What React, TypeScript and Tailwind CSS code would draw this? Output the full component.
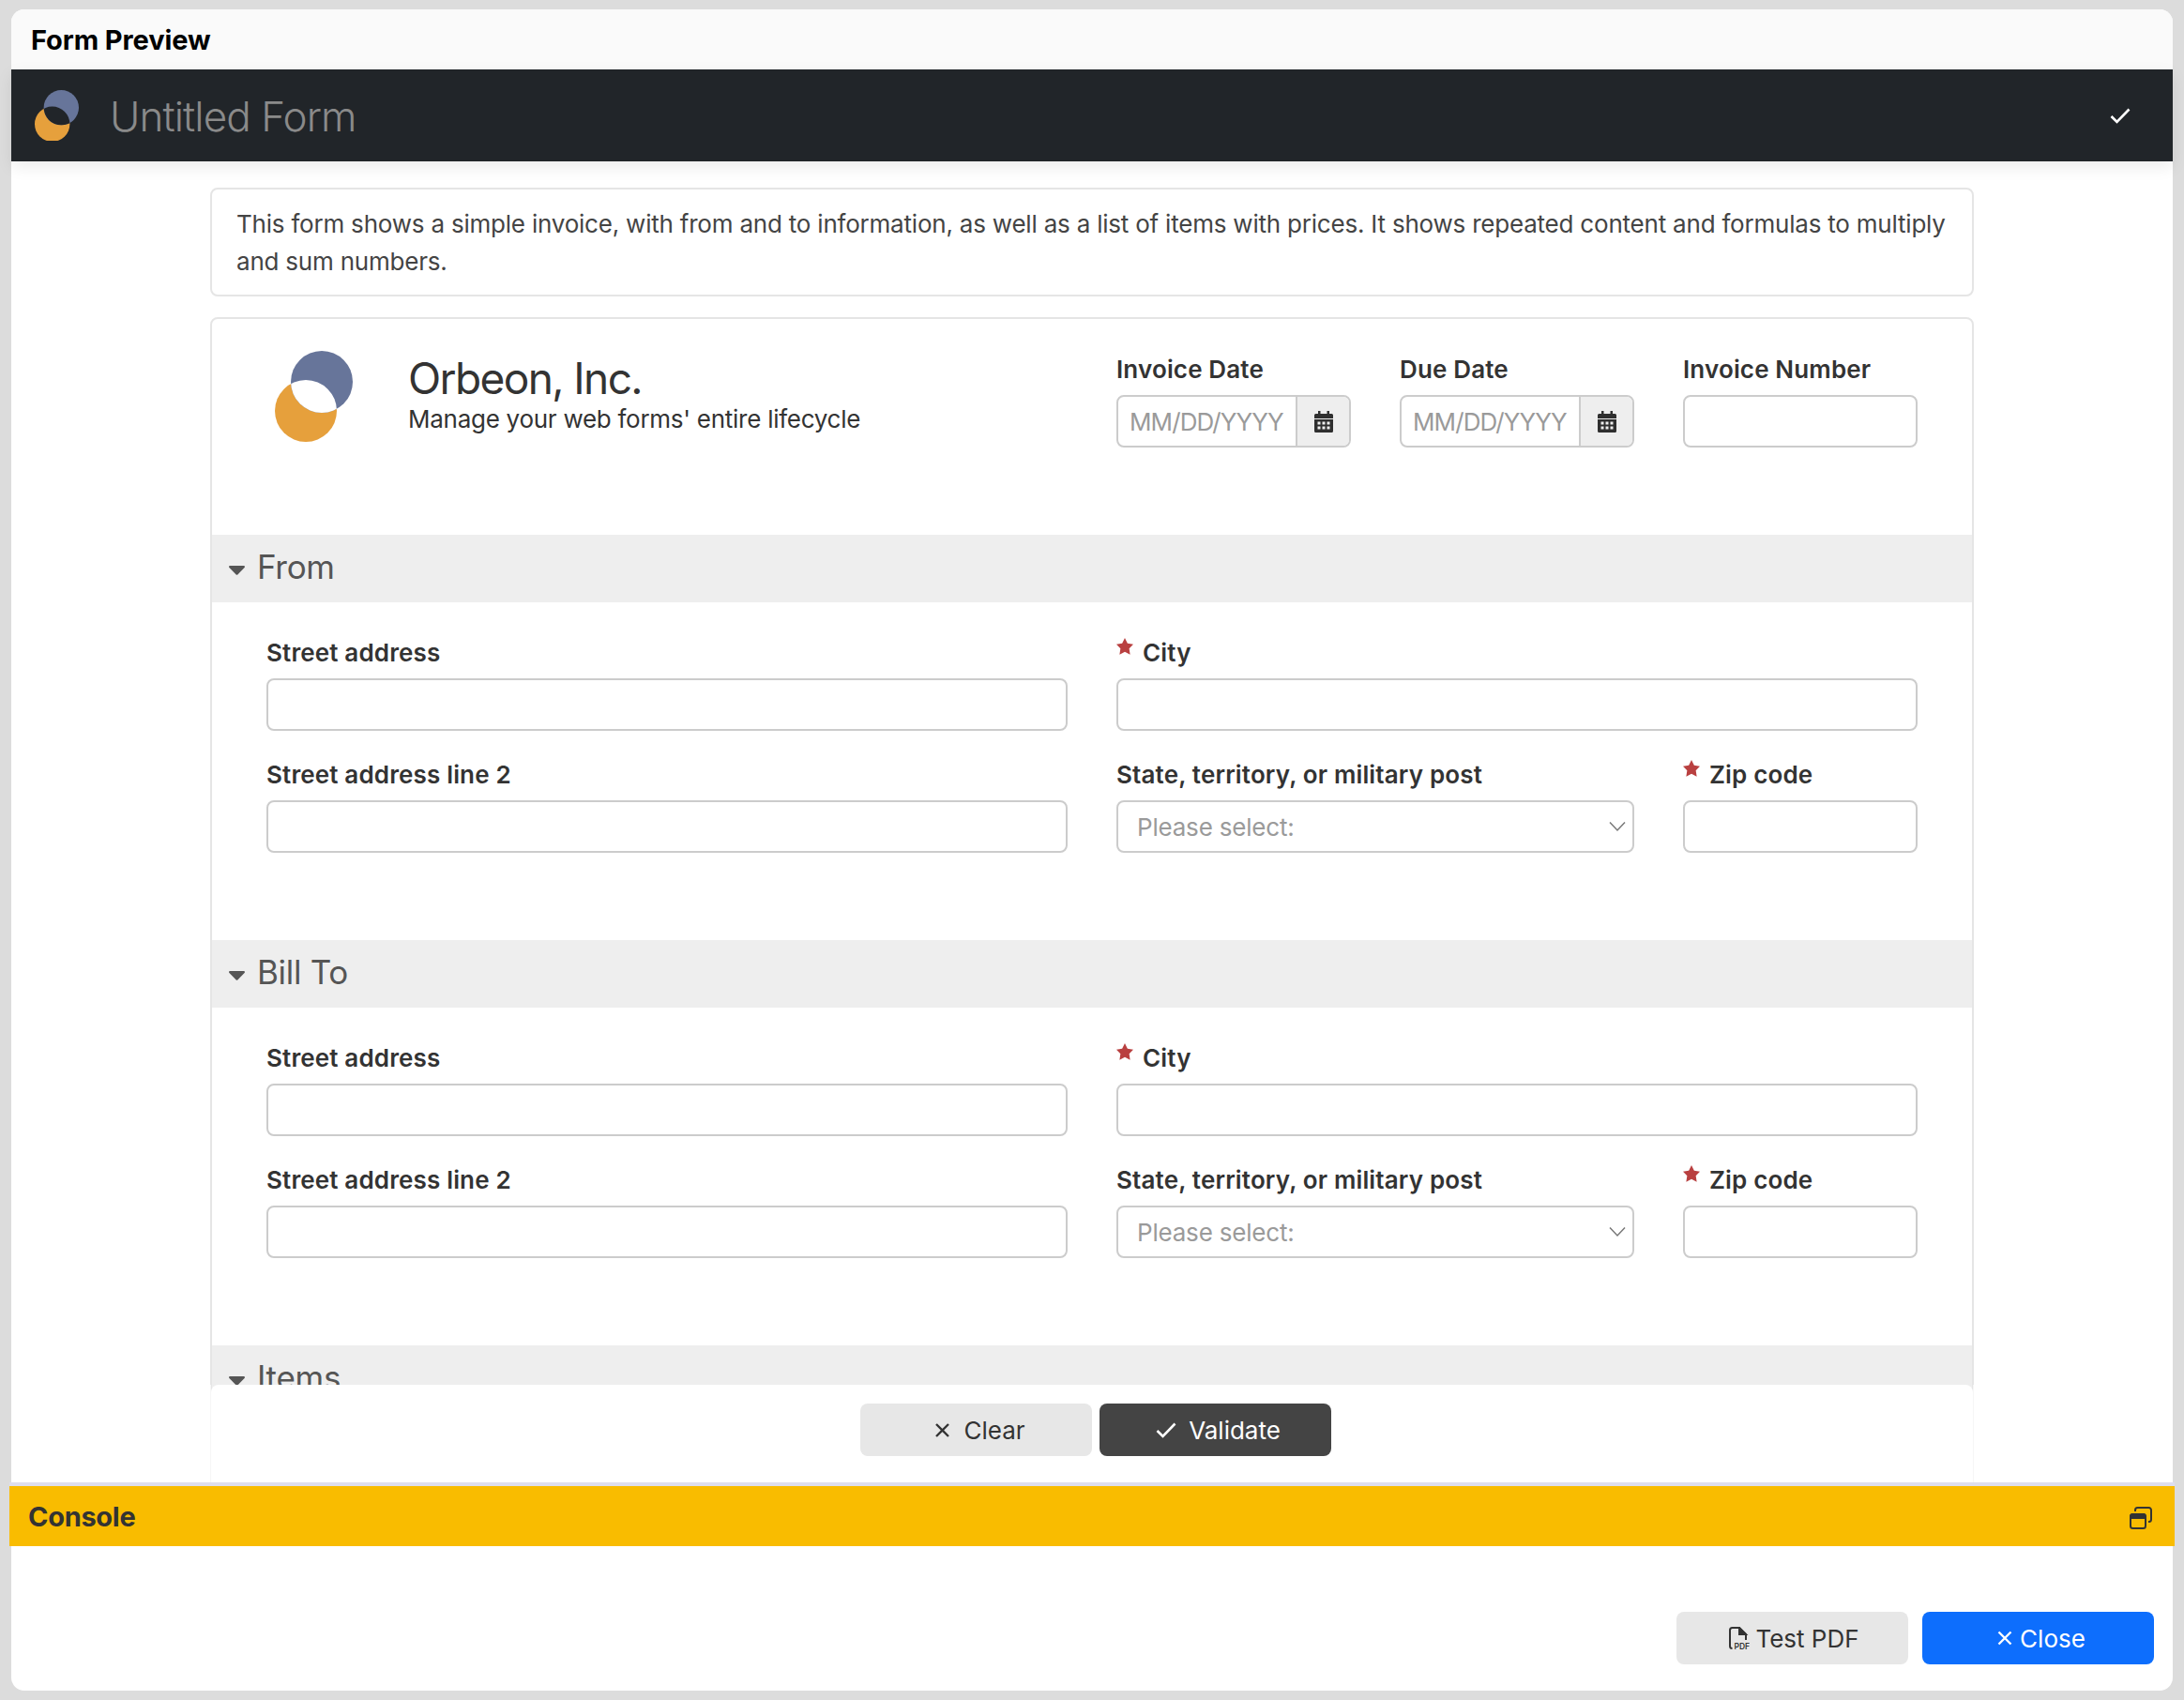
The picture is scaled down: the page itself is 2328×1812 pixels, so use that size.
const font = "font-['Inter',sans-serif]";

function Logo({ size, hole, id }: { size: number; hole: string; id: string }) {
  return (
    <svg width={size} height={(size * 97) / 83} viewBox="0 0 83 97" className="shrink-0">
      <defs>
        <clipPath id={id}>
          <circle cx="33" cy="64" r="33" />
        </clipPath>
      </defs>
      <circle cx="33" cy="64" r="33" fill="#e6a03c" />
      <circle cx="50" cy="33" r="33" fill="#67759a" />
      <circle cx="50" cy="33" r="33" fill={hole} clipPath={`url(#${id})`} />
    </svg>
  );
}

function Calendar() {
  return (
    <svg width="20" height="23" viewBox="0 0 20 23">
      <path fill="#2f2f2f" d="M4 0h2.500v3h7V0H16v3h2.500A1.500 1.500 0 0 1 20 4.500V8H0V4.500A1.500 1.500 0 0 1 1.500 3H4z" />
      <path fill="#2f2f2f" fillRule="evenodd" d="M0 9h20v12.500a1.500 1.500 0 0 1-1.500 1.500h-17A1.500 1.500 0 0 1 0 21.500zM3.500 11.500v3h3v-3zm5 0v3h3v-3zm5 0v3h3v-3zm-10 5v3h3v-3zm5 0v3h3v-3zm5 0v3h3v-3z" />
    </svg>
  );
}

function Star() {
  return (
    <svg width="18" height="18" viewBox="0 0 24 24" className="shrink-0 self-start mt-[-3px]">
      <path fill="#b94040" d="M12 0l3.800 7.500 8.200 1.400-5.800 6 1.300 8.600L12 19.500 4.500 23.500l1.300-8.600L0 8.900l8.200-1.400z" />
    </svg>
  );
}

function Label({ text, required }: { text: string; required?: boolean }) {
  return (
    <div className="flex items-center gap-[10px] h-[26px] mb-[14px] text-[26px] leading-[26px] font-semibold text-[#333333] tracking-[0.15px]">
      {required && <Star />}
      <span>{text}</span>
    </div>
  );
}

function TextInput() {
  return <div className="h-[56px] rounded-[8px] border-2 border-[#cccccc] bg-white" />;
}

function Field({ text, required, span }: { text: string; required?: boolean; span: string }) {
  return (
    <div className={span}>
      <Label text={text} required={required} />
      <TextInput />
    </div>
  );
}

function DateField({ text }: { text: string }) {
  return (
    <div className="col-span-2">
      <Label text={text} />
      <div className="flex h-[56px] rounded-[8px] border-2 border-[#cccccc] overflow-hidden bg-white">
        <div className="flex-1 flex items-center pl-[12px] text-[26px] text-[#9a9a9a] whitespace-nowrap overflow-hidden tracking-[-0.9px]">MM/DD/YYYY</div>
        <div className="w-[57px] shrink-0 flex items-center justify-center bg-[#eeeeee] border-l-2 border-[#cccccc]">
          <Calendar />
        </div>
      </div>
    </div>
  );
}

function SelectField() {
  return (
    <div className="col-span-4">
      <Label text="State, territory, or military post" />
      <div className="flex h-[56px] items-center justify-between rounded-[8px] border-2 border-[#cccccc] pl-[20px] pr-[7px] text-[26px] text-[#9a9a9a] bg-white tracking-[-0.2px]">
        <span>Please select:</span>
        <svg width="18" height="12" viewBox="0 0 18 12" fill="none" stroke="#777777" strokeWidth="1.500">
          <path d="M1 1.500l8 8.500 8-8.500" />
        </svg>
      </div>
    </div>
  );
}

function SectionHeader({ title }: { title: string }) {
  return (
    <div className="h-[72px] shrink-0 flex items-center bg-[#eeeeee] pl-[18px] gap-[13px] text-[35px] text-[#555555] tracking-[-0.3px]">
      <svg width="17" height="10" viewBox="0 0 17 10" className="mt-[4px]">
        <path fill="#555555" d="M1.200 0h14.600c1 0 1.500 1.200.8 1.900L9.300 9.500a1.200 1.200 0 0 1-1.600 0L.4 1.900C-.3 1.200.2 0 1.200 0z" />
      </svg>
      <span className="mt-[-4px]">{title}</span>
    </div>
  );
}

function AddressSection({ title }: { title: string }) {
  return (
    <>
      <SectionHeader title={title} />
      <div className="grid grid-cols-12 gap-x-[52px] gap-y-[34px] px-[58px] pt-[41px] pb-[93px]">
        <Field text="Street address" span="col-span-6" />
        <Field text="City" required span="col-span-6" />
        <Field text="Street address line 2" span="col-span-6" />
        <SelectField />
        <Field text="Zip code" required span="col-span-2" />
      </div>
    </>
  );
}

export default function App() {
  return (
    <div className={`w-[2328px] h-[1812px] bg-[#dcdcdc] pt-[10px] pb-[10px] px-[12px] ${font}`}>
      <div className="h-[1792px] bg-white rounded-[14px] flex flex-col">
        <div className="h-[64px] shrink-0 rounded-t-[14px] bg-[#fafafa] pl-[21px] pt-[2px] flex items-center text-[29px] font-bold text-black tracking-[-0.1px]">
          Form Preview
        </div>
        <div className="h-[98px] shrink-0 bg-[#212529] flex items-center pl-[25px] pr-[45px] shadow-[0_6px_16px_rgba(0,0,0,0.08)] relative z-10">
          <Logo size={47} hole="#212529" id="clip-small" />
          <span className="ml-[33px] mt-[2px] text-[44px] text-[#8a8a8a] font-light flex-1 leading-none tracking-[-0.9px]">Untitled Form</span>
          <svg width="22" height="17" viewBox="0 0 22 17" fill="none" stroke="#ffffff" strokeWidth="2.600">
            <path d="M1.500 9l6 6L20.500 1.500" />
          </svg>
        </div>

        <div className="flex-1 min-h-0 overflow-hidden px-[212px] pt-[28px]">
          <div className="rounded-[8px] border-2 border-[#e5e5e5] pl-[26px] pr-[26px] pt-[17px] pb-[15px] text-[26px] leading-[40px] text-[#444444] mb-[22px] tracking-[-0.21px]">
            This form shows a simple invoice, with from and to information, as well as a list of items with prices. It shows repeated content and formulas to multiply and sum numbers.
          </div>
          <div className="rounded-[8px] border-2 border-[#e5e5e5]">
            <div className="grid grid-cols-12 gap-x-[52px] px-[58px] pt-[41px] h-[230px]">
              <div className="col-span-6 flex items-start">
                <div className="ml-[9px] mt-[-7px]">
                  <Logo size={83} hole="#ffffff" id="clip-big" />
                </div>
                <div className="ml-[59px] mt-[-5px]">
                  <div className="text-[46px] leading-[54px] text-[#333333] font-normal tracking-[-1.6px]">Orbeon, Inc.</div>
                  <div className="text-[26px] leading-[34px] text-[#333333] tracking-[-0.27px]">Manage your web forms' entire lifecycle</div>
                </div>
              </div>
              <DateField text="Invoice Date" />
              <DateField text="Due Date" />
              <Field text="Invoice Number" span="col-span-2" />
            </div>
            <AddressSection title="From" />
            <AddressSection title="Bill To" />
            <SectionHeader title="Items" />
          </div>
        </div>

        <div className="shrink-0 mx-[212px] -mt-[8px] h-[104px] border-x border-[#f6f6f6] relative z-10">
          <div className="h-full flex justify-center gap-[8px] pt-[20px] pl-[8px] bg-white rounded-[8px]">
            <button className="w-[247px] h-[56px] rounded-[8px] bg-[#e7e7e7] text-[#333333] text-[26px] flex items-center justify-center gap-[14px] pl-[8px]">
              <svg width="17" height="17" viewBox="0 0 17 17" fill="none" stroke="#333333" strokeWidth="2.400">
                <path d="M2 2l13 13M15 2L2 15" />
              </svg>
              Clear
            </button>
            <button className="w-[247px] h-[56px] rounded-[8px] bg-[#444444] text-white text-[26px] flex items-center justify-center gap-[13px] pl-[6px]">
              <svg width="22" height="17" viewBox="0 0 22 17" fill="none" stroke="#ffffff" strokeWidth="2.600">
                <path d="M1.500 9l6 6L20.500 1.500" />
              </svg>
              Validate
            </button>
          </div>
        </div>

        <div className="shrink-0 -mx-[2px] border-t-4 border-[#dedeee] h-[68px] bg-[#f9bc00] flex items-center justify-between pl-[20px] pr-[24px] relative z-10">
          <span className="text-[29px] font-bold text-[#333333] tracking-[-0.3px] mt-[2px]">Console</span>
          <svg width="24" height="24" viewBox="0 0 24 24" fill="none" stroke="#333333" strokeWidth="2" className="mt-[3px]">
            <rect x="1" y="8" width="16" height="15" rx="2.500" />
            <path d="M1 10.500A2.500 2.500 0 0 1 3.500 8h11A2.500 2.500 0 0 1 17 10.500V12H1z" fill="#333333" />
            <path d="M6 5V3.500A2.500 2.500 0 0 1 8.500 1h12A2.500 2.500 0 0 1 23 3.500v10a2.500 2.500 0 0 1-2.500 2.500H20" />
          </svg>
        </div>

        <div className="h-[154px] shrink-0 flex items-end justify-end gap-[15px] pr-[20px] pb-[28px]">
          <button className="w-[247px] h-[56px] rounded-[8px] bg-[#e7e7e7] text-[#333333] text-[26px] flex items-center justify-center gap-[6px] pl-[4px]">
            <svg width="22" height="24" viewBox="0 0 22 24" fill="none" stroke="#333333" strokeWidth="2">
              <path d="M3.500 23C2 23 1 22 1 20.500V3.500C1 2 2 1 3.500 1H11l7 7v6" />
              <path d="M11 1v7h7z" fill="#333333" />
              <text x="5.500" y="23.500" fontSize="8.500" fontWeight="600" fill="#333333" stroke="none">PDF</text>
            </svg>
            Test PDF
          </button>
          <button className="w-[247px] h-[56px] rounded-[8px] bg-[#0d6efd] text-white text-[26px] flex items-center justify-center gap-[8px] pl-[7px]">
            <svg width="16" height="16" viewBox="0 0 16 16" fill="none" stroke="#ffffff" strokeWidth="2.400">
              <path d="M1.500 1.500l13 13M14.500 1.500l-13 13" />
            </svg>
            Close
          </button>
        </div>
      </div>
    </div>
  );
}
